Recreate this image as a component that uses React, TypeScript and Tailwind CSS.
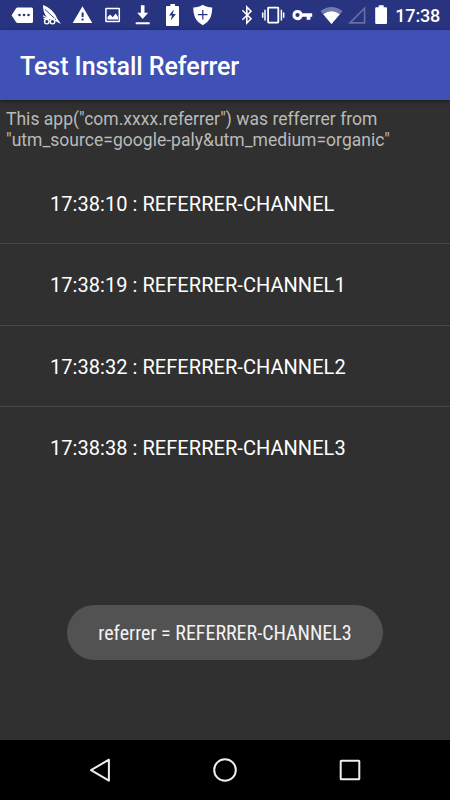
import { ReactNode } from "react";

type LogType = {
  time: string;
  channel: string;
};

const logs: LogType[] = [
  { time: "17:38:10", channel: "REFERRER-CHANNEL" },
  { time: "17:38:19", channel: "REFERRER-CHANNEL1" },
  { time: "17:38:32", channel: "REFERRER-CHANNEL2" },
  { time: "17:38:38", channel: "REFERRER-CHANNEL3" },
];

function Icon({ children }: { children: ReactNode }) {
  return (
    <svg width="30" height="30" viewBox="0 0 30 30" className="shrink-0" fill="#fff">
      {children}
    </svg>
  );
}

function StatusBar() {
  return (
    <div className="h-[30px] bg-[#283480] flex items-center pl-2 pr-[10px] text-white">
      {/* notifications */}
      <Icon>
        <path d="M9.5 7.5H23.5Q25 7.5 25 9V21.5Q25 23 23.5 23H9.5Q8.6 23 8 22.1L3.6 15.2L8 8.4Q8.6 7.5 9.5 7.5Z" />
        <g fill="#283480">
          <circle cx="11.5" cy="15" r="1.3" />
          <circle cx="16" cy="15" r="1.3" />
          <circle cx="20.5" cy="15" r="1.3" />
        </g>
      </Icon>
      <Icon>
        <path d="M5 5.1C11.5 7.6 17 12.5 19 18.3L23 24L17.8 21.3L8.8 17.3C6.2 14 5 10 5 5.1Z" />
        <path d="M6.8 9.2L18 19.8" stroke="#283480" strokeWidth=".9" />
        <g fill="#283480" stroke="#fff" strokeWidth="1.4">
          <circle cx="8.8" cy="21.6" r="2.3" />
          <circle cx="14.5" cy="21.6" r="2.3" />
        </g>
        <path d="M5 15.8L10 18.2M5.5 18.4L17 18.8" stroke="#fff" strokeWidth="1.1" />
      </Icon>
      <Icon>
        <path d="M14.5 6.3L24.3 23H4.7Z" />
        <path d="M13.6 12.5h2v4.5h-2zM13.6 18.5h2v2h-2z" fill="#283480" />
      </Icon>
      <Icon>
        <rect x="7.9" y="8.4" width="13.4" height="13.2" rx=".5" fill="none" stroke="#fff" strokeWidth="1.5" />
        <path d="M9.5 19.5V17L12.2 14.5L14.7 17.2L17.8 13.5L20 17V19.5Z" />
      </Icon>
      <Icon>
        <path d="M12.9 5.3h3.6v7.5h3.7L14.7 19L9.2 12.8h3.7zM7.7 22.2h14v2h-14z" />
      </Icon>
      <Icon>
        <path d="M12.4 4H17v2H20q1 0 1 1V25q0 1-1 1H9q-1 0-1-1V7q0-1 1-1H12.4Z" />
        <path d="M15.8 9.5L11 15.5H14L12.6 20.5L18 14H14.8Z" fill="#283480" />
      </Icon>
      <Icon>
        <path d="M14.8 4.7C17.5 6.5 20.5 7.4 24.2 7.6C24.3 15.5 22 21.5 14.8 25.2C7.6 21.5 5.2 15.5 5.3 7.6C9 7.4 12 6.5 14.8 4.7Z" />
        <path d="M14.8 10V19.5M10 14.7H19.5" stroke="#283480" strokeWidth="1.2" />
      </Icon>

      {/* system icons */}
      <svg width="166" height="30" viewBox="0 0 166 30" className="ml-auto mr-[3px] shrink-0" fill="#fff">
        <path d="M16.4 10.3L25 18.8L20.8 23V7L25 11.2L16.4 19.7" fill="none" stroke="#fff" strokeWidth="1.6" />
        <rect x="42.1" y="7.6" width="10.2" height="15" rx=".5" fill="none" stroke="#fff" strokeWidth="1.8" />
        <path d="M39 9.7V20.5M36.7 12.5V17.7M55.4 9.7V20.5M57.7 12.5V17.7" stroke="#fff" strokeWidth="1.5" />
        <path d="M71.5 9.9A5.1 5.1 0 0 1 76.4 13.3H86.2V16.8H84.4V19.8H80.7V16.8H76.4A5.1 5.1 0 1 1 71.5 9.9ZM71.5 12.9A2.1 2.1 0 1 0 71.5 17.1A2.1 2.1 0 0 0 71.5 12.9Z" fillRule="evenodd" />
        <path d="M94.5 11.2Q105.5 2.8 116.5 11.2L105.5 24Z" opacity=".35" />
        <path d="M97.2 14.2Q105.5 8.5 113.8 14.2L105.5 24Z" />
        <path d="M124 22.9L138.6 8.2V22.9Z" fill="none" stroke="#656fa6" strokeWidth="1.6" />
        <path d="M152.7 5.3H157.7V7.2H160q1 0 1 1V23q0 1-1 1H150.2q-1 0-1-1V8.2q0-1 1-1H152.7Z" />
      </svg>
      <span className="text-[18px] font-medium leading-[30px] pt-px tracking-[-0.2px]">
        17:38
      </span>
    </div>
  );
}

function NavigationBar() {
  return (
    <nav className="h-[60px] bg-black flex justify-center gap-[95px] items-center">
      <svg width="30" height="30" viewBox="0 0 30 30" fill="none" stroke="#eee" strokeWidth="2">
        <path d="M6 15.2L23.9 4.7V25.7Z" strokeLinejoin="round" />
      </svg>
      <svg width="30" height="30" viewBox="0 0 30 30" fill="none" stroke="#eee" strokeWidth="2">
        <circle cx="15" cy="15" r="10.8" />
      </svg>
      <svg width="30" height="30" viewBox="0 0 30 30" fill="none" stroke="#eee" strokeWidth="2">
        <rect x="5.7" y="5.7" width="18.6" height="18.6" rx=".5" />
      </svg>
    </nav>
  );
}

export default function App() {
  return (
    <div className="relative w-[450px] h-[800px] flex flex-col overflow-hidden bg-[#303030] font-[Roboto,sans-serif]">
      <StatusBar />

      <header className="h-[70px] bg-[#3f51b5] flex items-center pl-5 pt-[3px] shadow-[0_1px_4px_rgba(0,0,0,0.5)]">
        <h1 className="text-[25px] font-medium tracking-[-0.05px] text-white whitespace-nowrap">
          Test Install Referrer
        </h1>
      </header>

      <main className="flex-1">
        <p className="h-[63px] pl-[6px] pt-[9px] text-[17.5px] leading-[20.5px] tracking-[0.02px] text-[#bababa] whitespace-nowrap">
          This app("com.xxxx.referrer") was refferrer from
          <br />
          "utm_source=google-paly&utm_medium=organic"
        </p>

        <ul className="divide-y divide-[#484848]">
          {logs.map((log) => (
            <li
              key={log.time}
              className="h-[81.25px] pl-[50px] pt-[2px] flex items-center text-[20px] tracking-[0.05px] text-white whitespace-nowrap"
            >
              {log.time} : {log.channel}
            </li>
          ))}
        </ul>
      </main>

      <NavigationBar />

      {/* toast */}
      <div className="absolute left-[67px] top-[605px] w-[316px] h-[55px] rounded-full bg-[#525252] flex items-center justify-center">
        <span className="text-[20px] text-[#f2f2f2] whitespace-nowrap [font-stretch:75%] font-['Roboto_Condensed',Roboto,sans-serif]">
          referrer = REFERRER-CHANNEL3
        </span>
      </div>
    </div>
  );
}
